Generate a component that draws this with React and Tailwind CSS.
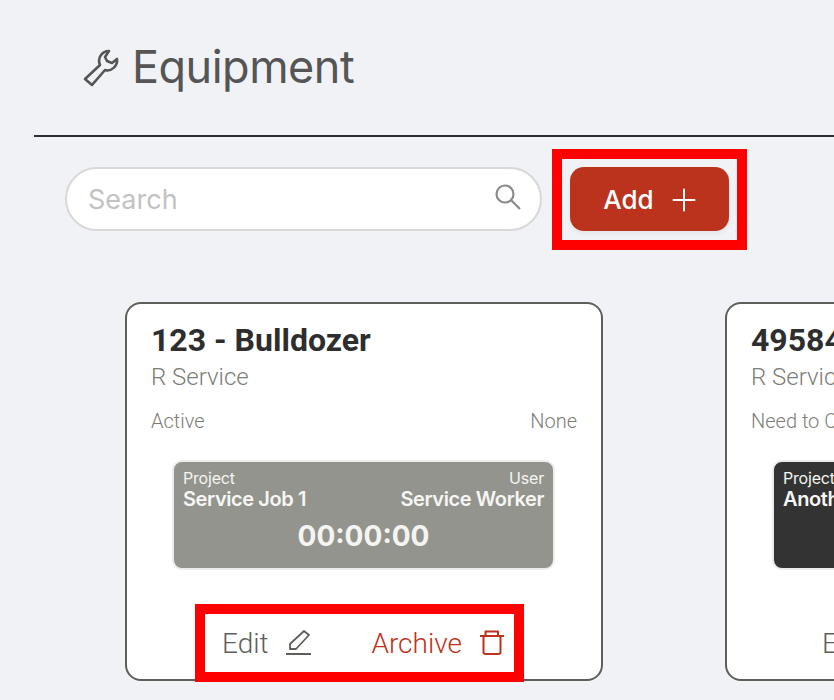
import { Plus } from 'lucide-react';

function WrenchIcon({ className }) {
  return (
    <svg viewBox="0 0 50 46" fill="none" stroke="currentColor" strokeWidth="2.6" strokeLinejoin="round" className={className}>
      <path d="M7 35 L22 21 C19 14 24 7 31 7 L27 13 L29 17 L34 19 L39 15 C40 22 33 28 27 26 L14 41 Z" />
    </svg>
  );
}

function PenIcon({ className }) {
  return (
    <svg viewBox="0 0 50 40" fill="none" stroke="currentColor" strokeWidth="1.8" strokeLinejoin="round" className={className}>
      <path d="M14 22 L28 9 L33 13 L20 27 L14 27 Z" />
      <path d="M10 32 H35" strokeWidth="2" />
    </svg>
  );
}

function TrashIcon({ className }) {
  return (
    <svg viewBox="0 0 44 40" fill="none" stroke="currentColor" strokeWidth="2" strokeLinejoin="round" className={className}>
      <path d="M10 14 H34" />
      <path d="M15.5 14 V9.5 H28 V14" />
      <path d="M13.5 14 V30 Q13.5 32 15.5 32 H28.5 Q30.5 32 30.5 30 V14" />
    </svg>
  );
}

function SearchIcon({ className }) {
  return (
    <svg viewBox="0 0 40 40" fill="none" stroke="currentColor" strokeWidth="2.2" className={className}>
      <circle cx="16" cy="15" r="8.5" />
      <path d="M22 21 L31 30" />
    </svg>
  );
}

function TimerBox({ dark, project, user, time }) {
  return (
    <div className={`ml-[45px] mt-[27px] h-[110px] w-[383px] shrink-0 rounded-[10px] border-2 border-[#ececec] px-[9px] pt-[8px] text-white ${dark ? 'bg-[#333333]' : 'bg-[#94948e]'}`}>
      <div className="flex justify-between font-['Inter',sans-serif] text-[16px] leading-[17px] tracking-[-0.2px] text-[#f4f4f2]">
        <span>Project</span>
        <span>User</span>
      </div>
      <div className="flex justify-between whitespace-nowrap font-['Inter',sans-serif] text-[20px] font-semibold leading-[24px] tracking-[-0.4px] text-[#f6f6f4]">
        <span>{project}</span>
        <span>{user}</span>
      </div>
      <div className="mt-[7px] text-center font-['Inter',sans-serif] text-[28px] font-bold leading-[36px] text-[#f4f4f2]">
        {time}
      </div>
    </div>
  );
}

function EquipmentCard({ title, status, right, project, user, dark, outlined }) {
  return (
    <div className="flex h-[379px] w-[478px] shrink-0 flex-col rounded-[16px] border-2 border-[#5e5e5a] bg-white font-['Roboto',sans-serif]">
      <div className="px-[24px] pt-[17px]">
        <h2 className="whitespace-nowrap text-[32px] font-bold leading-[38px] text-[#2e2e2e]">{title}</h2>
        <p className="mt-[4px] whitespace-nowrap text-[24px] font-light leading-[28px] text-[#7d7d78]">R Service</p>
        <div className="mt-[18px] flex justify-between whitespace-nowrap text-[20px] font-light leading-[24px] text-[#7d7d78]">
          <span>{status}</span>
          <span>{right}</span>
        </div>
      </div>
      <TimerBox dark={dark} project={project} user={user} time="00:00:00" />
      <div className={`ml-[68px] mt-[34px] flex h-[78px] w-[329px] shrink-0 items-center border-[10px] pl-[17px] ${outlined ? 'border-[#ff0000]' : 'border-transparent'}`}>
        <span className="pt-[2px] text-[28px] font-light text-[#5e5e5a]">Edit</span>
        <PenIcon className="-mt-[2px] ml-[7px] h-[40px] w-[50px] text-[#5e5e5a]" />
        <span className="ml-auto pt-[2px] text-[28px] font-light text-[#bb331d]">Archive</span>
        <TrashIcon className="-mt-[2px] ml-[8px] h-[40px] w-[44px] text-[#bb331d]" />
      </div>
    </div>
  );
}

export default function App() {
  return (
    <div className="h-[700px] w-[834px] overflow-hidden bg-[#f0f2f6]">
      <div className="ml-[34px] h-[137px] border-b-2 border-[#2e2e2e] pl-[44px] pt-[37px]">
        <div className="flex items-center text-[#555555]">
          <WrenchIcon className="h-[46px] w-[50px]" />
          <h1 className="ml-[4px] font-['Inter',sans-serif] text-[45px] font-normal leading-[60px] tracking-[-0.5px]">Equipment</h1>
        </div>
      </div>

      <div className="ml-[65px] mt-[12px] flex items-start">
        <div className="mt-[18px] flex h-[64px] w-[477px] items-center rounded-full border-2 border-[#d8d8d8] bg-white pl-[21px] pr-[11px]">
          <span className="flex-1 pt-[2px] font-['Inter',sans-serif] text-[27px] text-[#c2c2c2]">Search</span>
          <SearchIcon className="h-[40px] w-[40px] text-[#8a8a8a]" />
        </div>
        <div className="ml-[10px] border-[10px] border-[#ff0000] px-[8px] pb-[9px] pt-[8px]">
          <button className="flex h-[64px] w-[159px] items-center justify-center rounded-[14px] bg-[#bb331d] pl-[6px] pt-[1px] font-['Inter',sans-serif] text-[26px] font-medium text-white shadow-[0_3px_4px_rgba(0,0,0,0.05)]">
            Add
            <Plus className="ml-[12px] h-[36px] w-[36px]" strokeWidth={1.3} />
          </button>
        </div>
      </div>

      <div className="ml-[125px] mt-[52px] flex gap-[122px]">
        <EquipmentCard title="123 - Bulldozer" status="Active" right="None" project="Service Job 1" user="Service Worker" outlined />
        <EquipmentCard title="49584 - Excavator" status="Need to Check" right="None" project="Another Job" user="Service Worker" dark />
      </div>
    </div>
  );
}
